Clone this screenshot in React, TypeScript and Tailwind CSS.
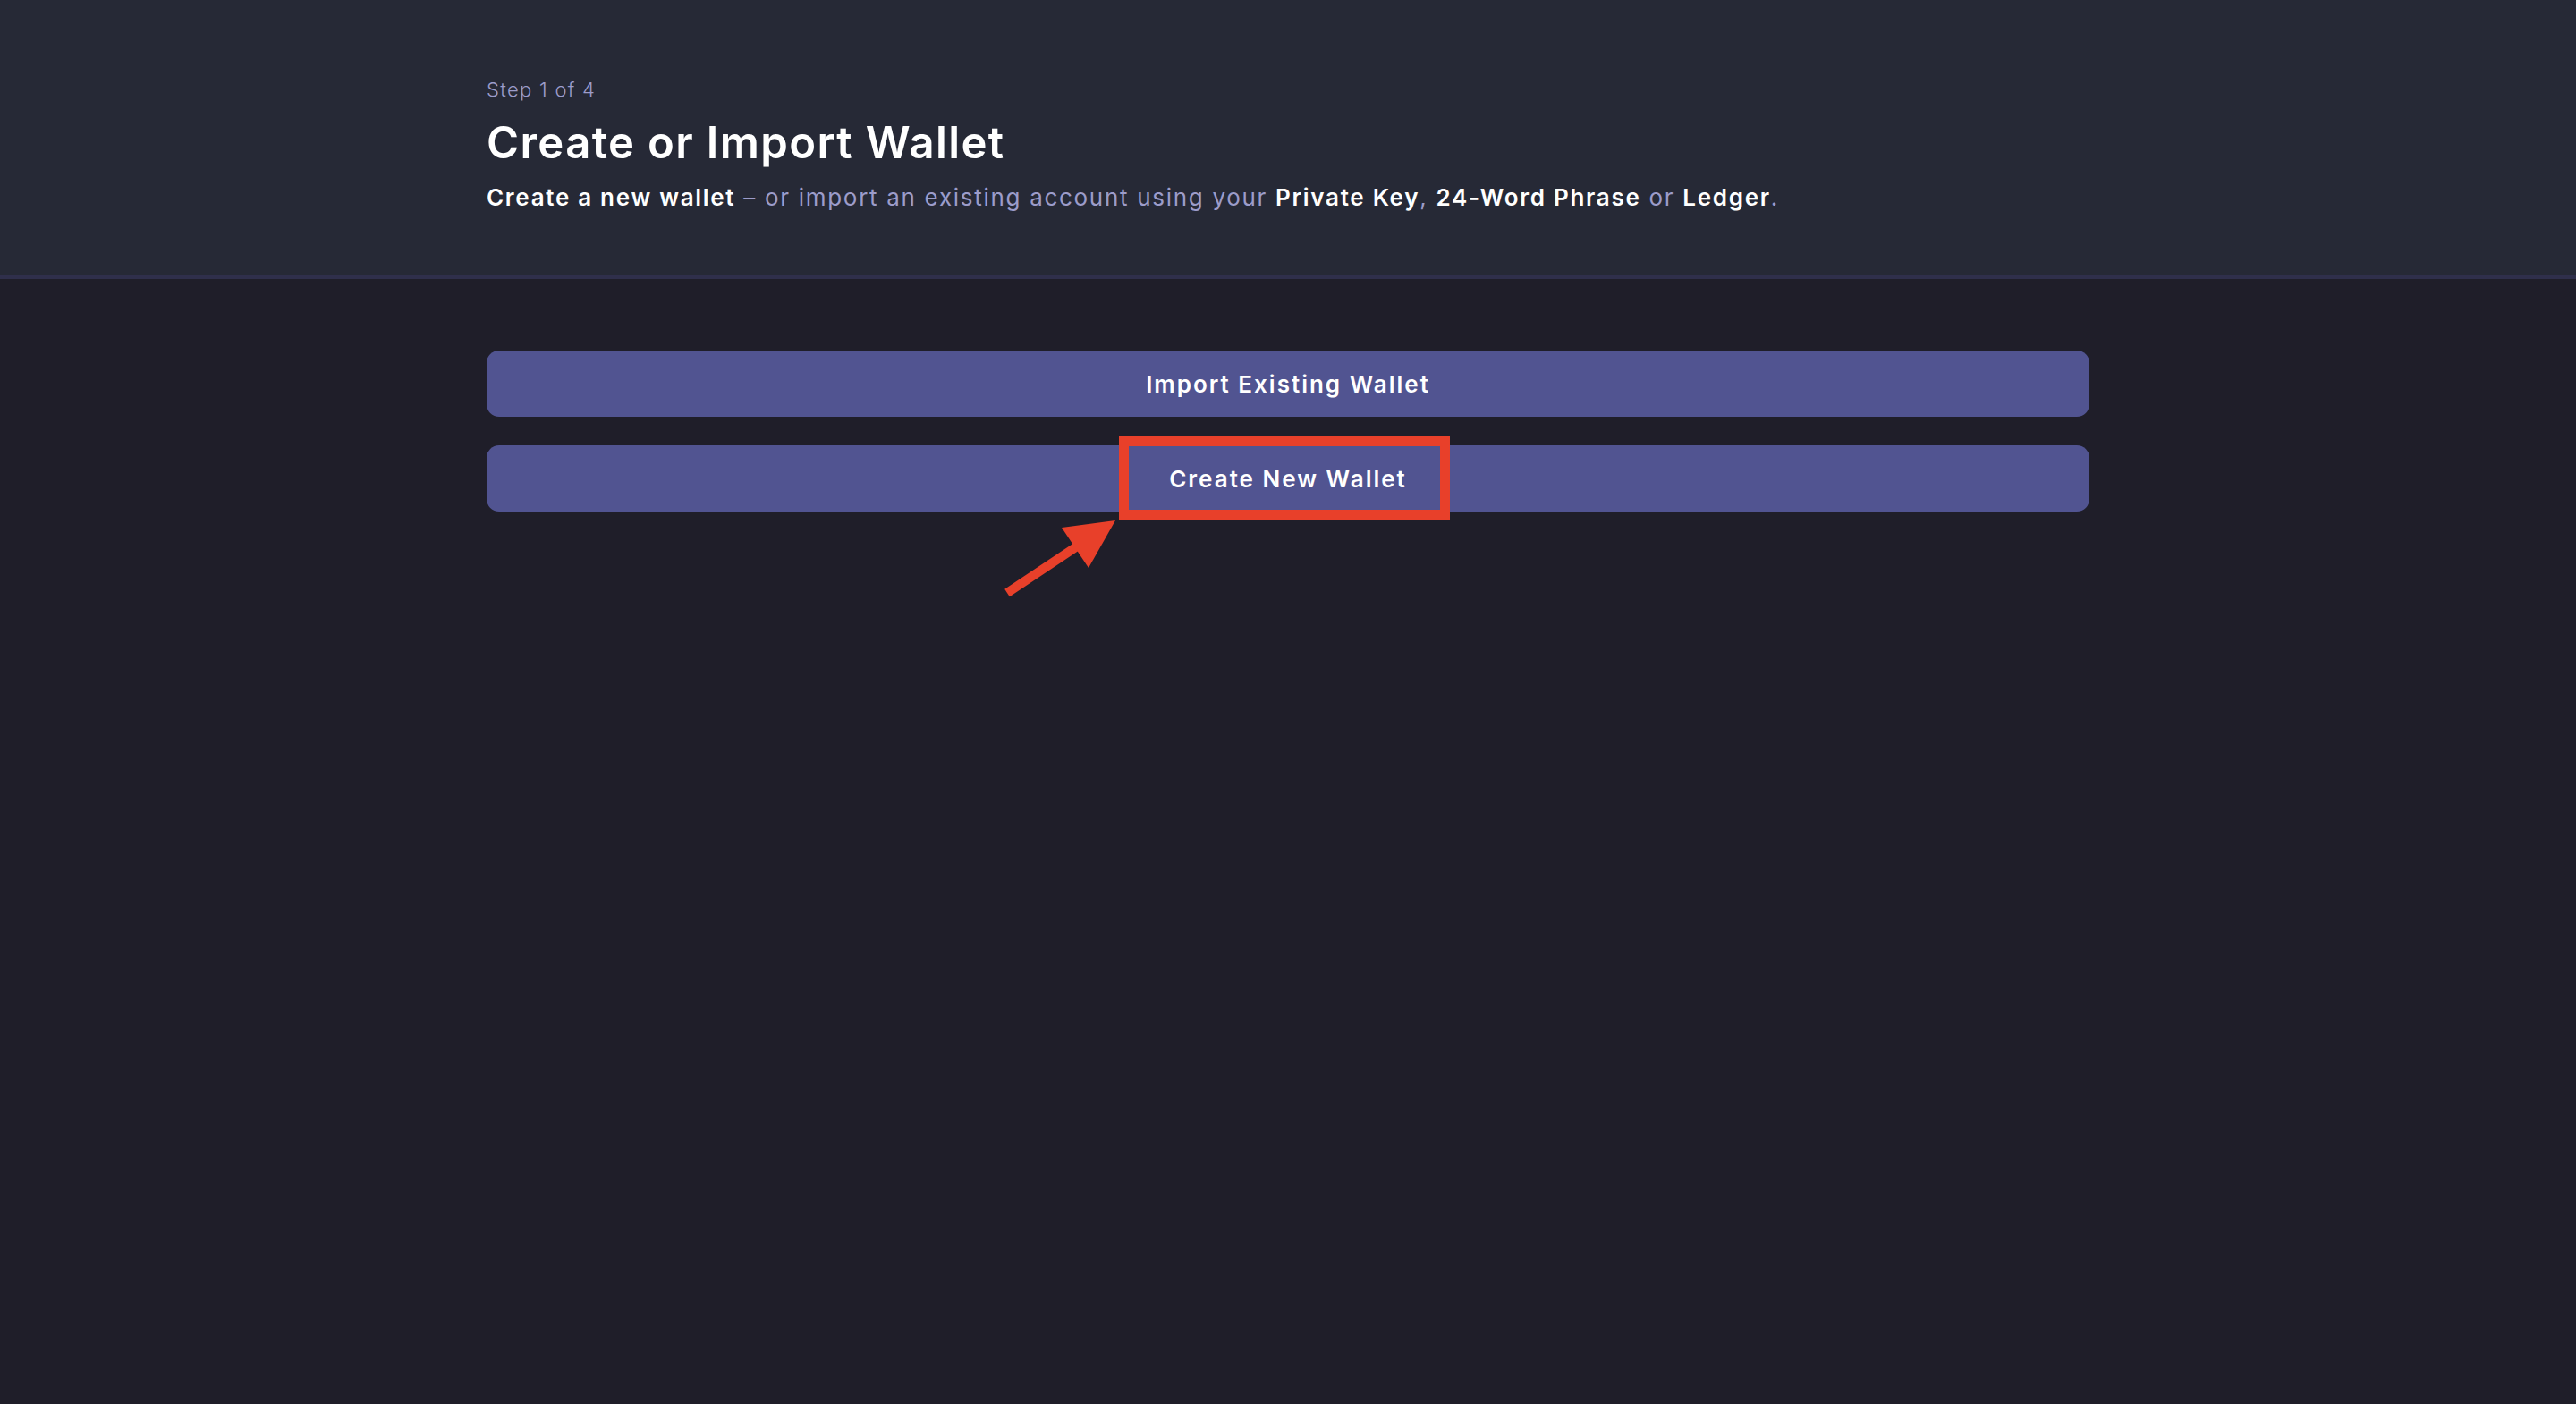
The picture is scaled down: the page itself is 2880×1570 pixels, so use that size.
import React from "react";

const font = { fontFamily: "Inter, 'Noto Sans', sans-serif" };

function Arrow() {
  return (
    <svg
      className="absolute left-[566px] top-[77px] pointer-events-none"
      width="145"
      height="100"
      viewBox="0 0 145 100"
    >
      <line x1="16" y1="88" x2="94" y2="36" stroke="#e8402a" strokeWidth="10" />
      <polygon points="137,7 77,15 107,60" fill="#e8402a" />
    </svg>
  );
}

export default function App() {
  return (
    <div className="min-h-[1570px] bg-[#1f1e29] text-white" style={font}>
      {/* Header */}
      <header className="h-[312px] bg-[#262936] border-b-4 border-[#2f2f4b]">
        <div className="w-[1792px] mx-auto pt-[89px]">
          <p className="text-[22px] leading-none font-light tracking-[1.3px] text-[#9c9cca]">Step 1 of 4</p>
          <h1 className="mt-[24px] text-[49px] leading-none font-semibold tracking-[1.4px] text-white">
            Create or Import Wallet
          </h1>
          <p className="mt-[24px] text-[26px] leading-none tracking-[1.7px] text-[#9c9cca]">
            <span className="font-semibold text-white">Create a new wallet</span> – or import an existing
            account using your <span className="font-semibold text-white">Private Key</span>,{" "}
            <span className="font-semibold text-white">24-Word Phrase</span> or{" "}
            <span className="font-semibold text-white">Ledger</span>.
          </p>
        </div>
      </header>

      {/* Actions */}
      <div className="w-[1792px] mx-auto pt-[80px] flex flex-col gap-[32px]">
        <button className="h-[74px] w-full rounded-[14px] bg-[#515491] text-[26px] font-semibold tracking-[2px] text-white flex items-center justify-center">
          Import Existing Wallet
        </button>
        <div className="relative">
          <button className="h-[74px] w-full rounded-[14px] bg-[#515491] text-[26px] font-semibold tracking-[2px] text-white flex items-center justify-center">
            Create New Wallet
          </button>
          {/* annotation */}
          <div className="absolute left-[707px] top-[-10px] w-[370px] h-[93px] border-[11px] border-[#e8402a] pointer-events-none" />
          <Arrow />
        </div>
      </div>
    </div>
  );
}
